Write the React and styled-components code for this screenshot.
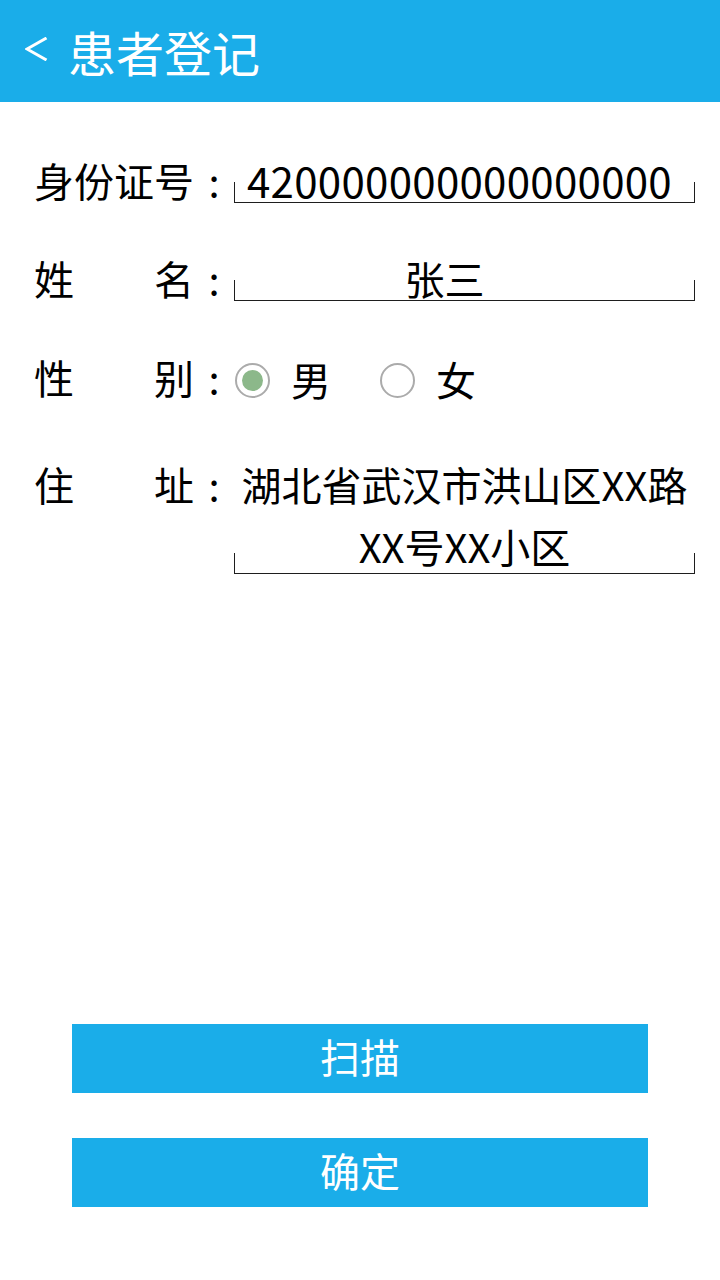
import React from "react";
import styled, { createGlobalStyle } from "styled-components";

const Global = createGlobalStyle`
  html, body { margin: 0; padding: 0; background: #fff; }
  body { font-family: "Noto Sans CJK SC", "Noto Sans", sans-serif; color: #000; }
  * { box-sizing: border-box; }
`;

const BLUE = "#1aade9";

const Page = styled.div`
  width: 720px;
  min-height: 1280px;
  display: flex;
  flex-direction: column;
`;

const Header = styled.header`
  height: 102px;
  background: ${BLUE};
  display: flex;
  align-items: center;
  padding-left: 25px;
  color: #fff;
`;

const Back = styled.button`
  border: 0;
  background: none;
  padding: 0;
  width: 23px;
  height: 24px;
  margin: -4px 20px 0 0;
  display: flex;
  align-items: center;
  justify-content: center;
  cursor: pointer;
`;

const Title = styled.h1`
  margin: 0;
  font-size: 48px;
  font-weight: 400;
  line-height: 1;
  color: #fff;
`;

const Form = styled.div`
  display: flex;
  flex-direction: column;
  padding: 61px 25px 0 34px;
`;

const Row = styled.div`
  display: flex;
  align-items: flex-start;
  margin-top: ${(p) => p.$gap || 0}px;
`;

const Label = styled.div`
  width: 160px;
  height: ${(p) => p.$lh || 40}px;
  font-size: 40px;
  line-height: ${(p) => p.$lh || 34}px;
  text-align: justify;
  text-align-last: justify;
  white-space: nowrap;
  flex-shrink: 0;
`;

const Colon = styled.span`
  width: 40px;
  height: ${(p) => p.$lh || 40}px;
  font-size: 40px;
  line-height: ${(p) => p.$lh || 34}px;
  text-align: center;
  flex-shrink: 0;
`;

const Field = styled.div`
  position: relative;
  flex: 1;
  font-size: ${(p) => p.$fs || 40}px;
  line-height: ${(p) => p.$lh || 34}px;
  height: ${(p) => p.$h || 40}px;
  text-align: center;
  padding-right: ${(p) => p.$pr || 0}px;
  letter-spacing: ${(p) => p.$ls || 0}px;
  border-bottom: 1px solid #1e1e1e;
  white-space: ${(p) => (p.$wrap ? "normal" : "nowrap")};
  &::before, &::after {
    content: "";
    position: absolute;
    bottom: 0;
    width: 1px;
    height: 20px;
    background: #1e1e1e;
  }
  &::before { left: 0; }
  &::after { right: 0; }
`;

const RadioGroup = styled.div`
  display: flex;
  align-items: center;
  height: 40px;
  gap: 48px;
`;

const RadioItem = styled.label`
  display: flex;
  align-items: center;
  gap: 21px;
  font-size: 40px;
  line-height: 34px;
  padding-bottom: 3px;
`;

const Circle = styled.span`
  width: 35px;
  height: 35px;
  border-radius: 50%;
  border: 2px solid #ababab;
  display: flex;
  align-items: center;
  justify-content: center;
  margin: 3px 0 0 1px;
  &::after {
    content: "";
    width: 21px;
    height: 21px;
    border-radius: 50%;
    background: ${(p) => (p.$on ? "#8cb88a" : "transparent")};
  }
`;

const Buttons = styled.div`
  margin-top: auto;
  display: flex;
  flex-direction: column;
  align-items: center;
  gap: 45px;
  padding-bottom: 73px;
`;

const Button = styled.button`
  width: 576px;
  height: 69px;
  border: 0;
  background: ${BLUE};
  color: #fff;
  font-family: "Noto Sans CJK SC", "Noto Sans", sans-serif;
  font-size: 40px;
  line-height: 64px;
  padding: 0 0 5px;
  cursor: pointer;
`;

export default function App() {
  return (
    <Page>
      <Global />
      <Header>
        <Back aria-label="back">
          <svg width="23" height="24" viewBox="0 0 23 24">
            <polyline points="21.5,1 2,12 21.5,23" fill="none" stroke="#fff" strokeWidth="3" />
          </svg>
        </Back>
        <Title>患者登记</Title>
      </Header>
      <Form>
        <Row>
          <Label>身份证号</Label>
          <Colon>:</Colon>
          <Field $fs={42} $ls={0.3} $pr={10}>420000000000000000</Field>
        </Row>
        <Row $gap={58}>
          <Label>姓名</Label>
          <Colon>:</Colon>
          <Field $pr={40}>张三</Field>
        </Row>
        <Row $gap={59}>
          <Label>性别</Label>
          <Colon>:</Colon>
          <RadioGroup>
            <RadioItem>
              <Circle $on />
              男
            </RadioItem>
            <RadioItem>
              <Circle />
              女
            </RadioItem>
          </RadioGroup>
        </Row>
        <Row $gap={53}>
          <Label $lh={62}>住址</Label>
          <Colon $lh={62}>:</Colon>
          <Field $lh={62} $h={121} $wrap>湖北省武汉市洪山区XX路XX号XX小区</Field>
        </Row>
      </Form>
      <Buttons>
        <Button>扫描</Button>
        <Button>确定</Button>
      </Buttons>
    </Page>
  );
}
